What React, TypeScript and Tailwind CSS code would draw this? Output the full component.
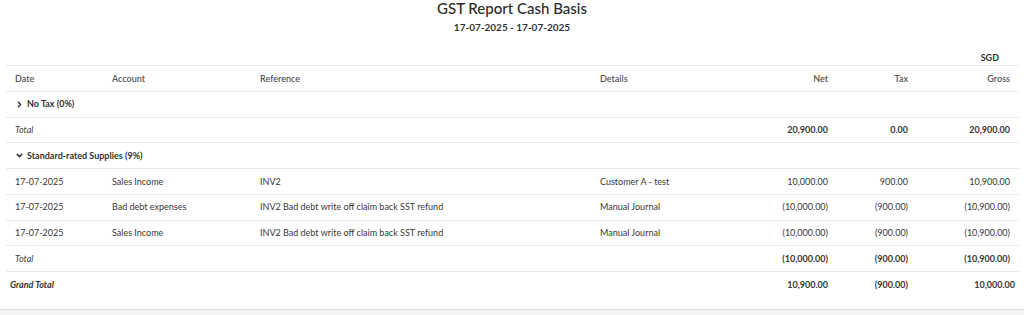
import React from 'react';
import { ChevronRight, ChevronDown } from 'lucide-react';

type Row = {
  date: string;
  account: string;
  reference: string;
  details: string;
  net: string;
  tax: string;
  gross: string;
};

const rows: Row[] = [
  { date: '17-07-2025', account: 'Sales Income', reference: 'INV2', details: 'Customer A - test', net: '10,000.00', tax: '900.00', gross: '10,900.00' },
  { date: '17-07-2025', account: 'Bad debt expenses', reference: 'INV2 Bad debt write off claim back SST refund', details: 'Manual Journal', net: '(10,000.00)', tax: '(900.00)', gross: '(10,900.00)' },
  { date: '17-07-2025', account: 'Sales Income', reference: 'INV2 Bad debt write off claim back SST refund', details: 'Manual Journal', net: '(10,000.00)', tax: '(900.00)', gross: '(10,900.00)' },
];

const td = 'h-[25.75px] px-[9px] py-0 align-middle';
const tr = 'border-b border-[#e9e9e9]';

export default function App() {
  return (
    <div className="h-[315px] w-[1024px] flex flex-col bg-white text-[#383838] font-['Lato',sans-serif] overflow-hidden">
      <div className="flex-1">
        <div className="text-center">
          <h1 className="text-[15px] leading-[16px] font-medium text-[#2b2b2b]">GST Report Cash Basis</h1>
          <div className="mt-[5px] text-[10px] leading-[12px] font-bold text-[#333]">17-07-2025 - 17-07-2025</div>
        </div>
        <div className="mt-[18px] mx-[6px]">
          <div className="flex justify-end pr-[19px] h-[14px] items-center text-[9px] font-bold text-[#333]">SGD</div>
          <table className="w-[1013px] table-fixed border-collapse text-[9px]">
            <colgroup>
              <col className="w-[97px]" />
              <col className="w-[148px]" />
              <col className="w-[340px]" />
              <col className="w-[166px]" />
              <col className="w-[80px]" />
              <col className="w-[80px]" />
              <col className="w-[102px]" />
            </colgroup>
            <thead>
              <tr className="border-y border-[#e9e9e9] text-[#555]">
                <th className={`${td} text-left font-semibold`}>Date</th>
                <th className={`${td} text-left font-semibold`}>Account</th>
                <th className={`${td} text-left font-semibold`}>Reference</th>
                <th className={`${td} text-left font-semibold`}>Details</th>
                <th className={`${td} text-right font-semibold`}>Net</th>
                <th className={`${td} text-right font-semibold`}>Tax</th>
                <th className={`${td} text-right font-semibold`}>Gross</th>
              </tr>
            </thead>
            <tbody>
              <tr className={tr}>
                <td className={`${td} font-bold text-[#333]`} colSpan={7}>
                  <span className="flex items-center gap-[3px]">
                    <ChevronRight size={9} strokeWidth={4} />
                    No Tax (0%)
                  </span>
                </td>
              </tr>
              <tr className={tr}>
                <td className={`${td} italic text-[#444]`} colSpan={4}>Total</td>
                <td className={`${td} text-right font-bold`}>20,900.00</td>
                <td className={`${td} text-right font-bold`}>0.00</td>
                <td className={`${td} text-right font-bold`}>20,900.00</td>
              </tr>
              <tr className={tr}>
                <td className={`${td} font-bold text-[#333]`} colSpan={7}>
                  <span className="flex items-center gap-[3px]">
                    <ChevronDown size={9} strokeWidth={4} />
                    Standard-rated Supplies (9%)
                  </span>
                </td>
              </tr>
              {rows.map((r, i) => (
                <tr key={i} className={tr}>
                  <td className={td}>{r.date}</td>
                  <td className={td}>{r.account}</td>
                  <td className={td}>{r.reference}</td>
                  <td className={td}>{r.details}</td>
                  <td className={`${td} text-right`}>{r.net}</td>
                  <td className={`${td} text-right`}>{r.tax}</td>
                  <td className={`${td} text-right`}>{r.gross}</td>
                </tr>
              ))}
              <tr className={tr}>
                <td className={`${td} italic text-[#444]`} colSpan={4}>Total</td>
                <td className={`${td} text-right font-bold`}>(10,000.00)</td>
                <td className={`${td} text-right font-bold`}>(900.00)</td>
                <td className={`${td} text-right font-bold`}>(10,900.00)</td>
              </tr>
              <tr>
                <td className="h-[25.75px] pl-[4px] italic font-bold text-[#333]" colSpan={4}>Grand Total</td>
                <td className={`${td} text-right font-bold`}>10,900.00</td>
                <td className={`${td} text-right font-bold`}>(900.00)</td>
                <td className="h-[25.75px] pr-[4px] text-right font-bold">10,000.00</td>
              </tr>
            </tbody>
          </table>
        </div>
      </div>
      <div className="h-[6px] border-t border-[#dedede] bg-[#f4f4f4]" />
    </div>
  );
}
